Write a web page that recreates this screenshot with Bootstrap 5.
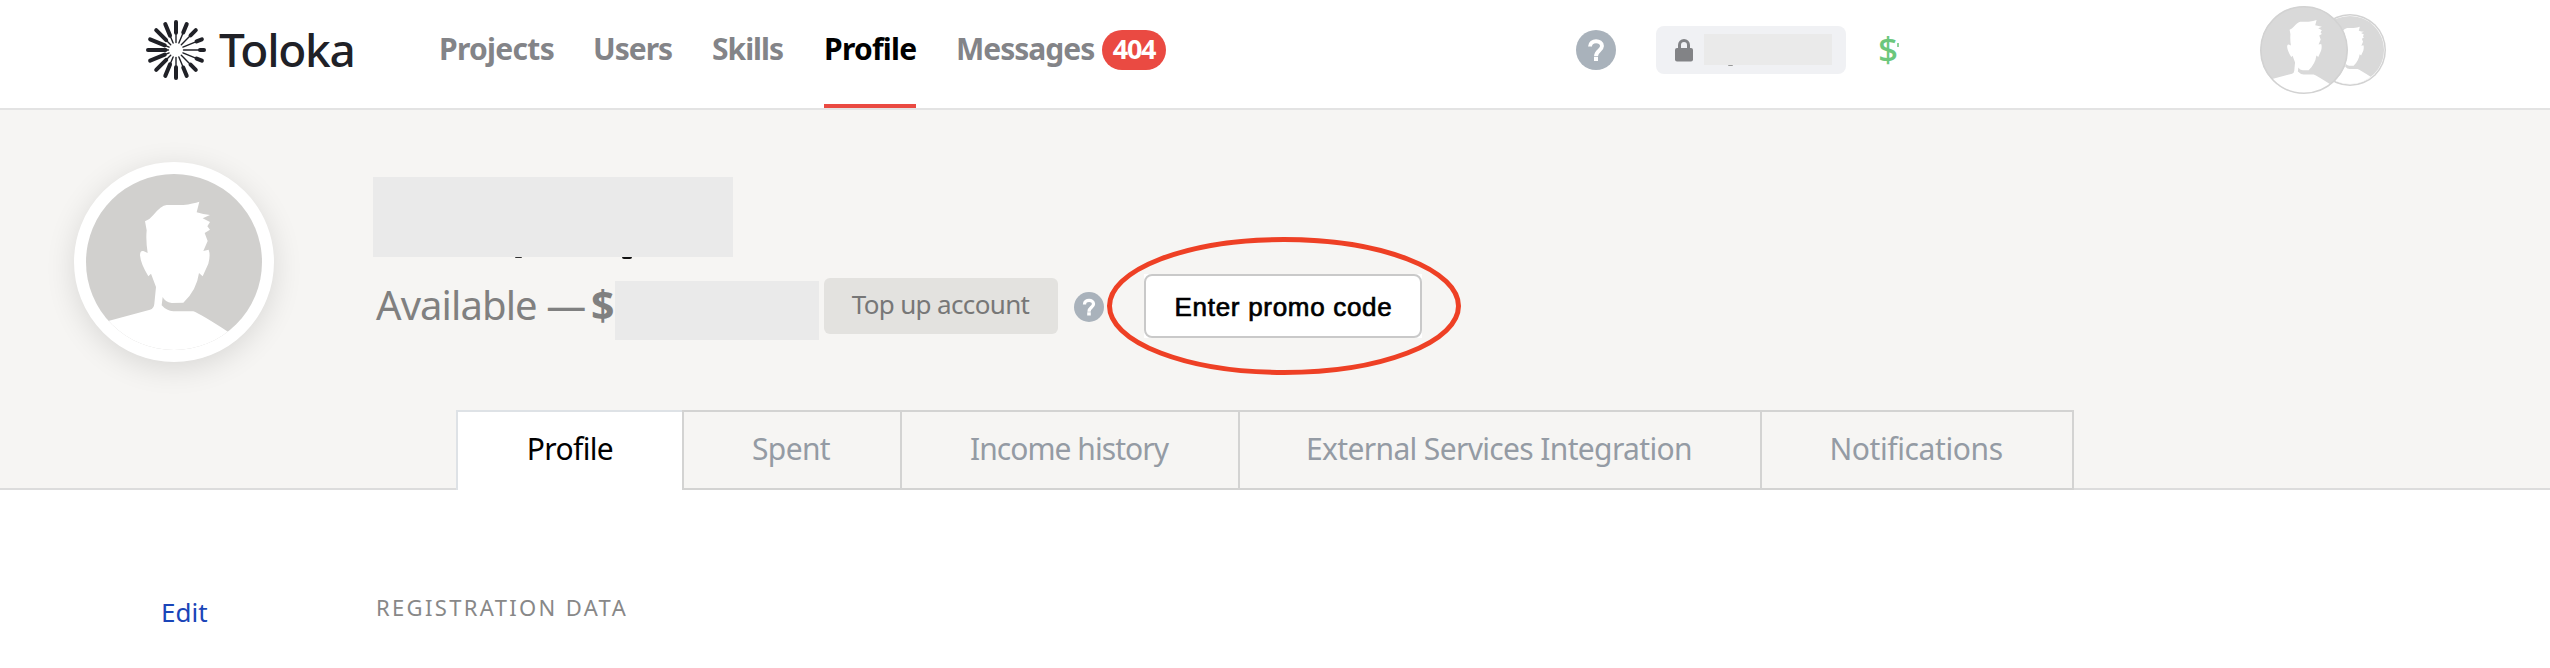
<!DOCTYPE html>
<html lang="en">
<head>
<meta charset="utf-8">
<title>Toloka – Profile</title>
<link rel="stylesheet" href="https://cdn.jsdelivr.net/npm/bootstrap@5.3.0/dist/css/bootstrap.min.css">
<style>
body{font-family:"Noto Sans",sans-serif;background:#fff;color:#000;overflow:hidden}
.site-header{height:110px;padding:0;border-bottom:2px solid #e3e3e3;background:#fff}
.site-header>*{flex:none}
.brand-link{margin-left:146px;width:293px;height:100px;color:#202127}
.brand-name{font-size:46px;font-weight:500;letter-spacing:-1.3px;line-height:60px;margin-left:13px;margin-bottom:3px}
.main-nav{display:grid;grid-template-columns:154px 119px 112px 132px 146px 64px;height:108px;width:727px}
.main-nav .nav-link{font-size:30px;font-weight:700;line-height:98px;padding:0;height:108px;color:#838488;letter-spacing:-1px;white-space:nowrap}
.main-nav .nav-link.active{color:#000;justify-self:start;width:92px;letter-spacing:-.75px;border-bottom:4px solid #ea4a42}
.count-pill{height:40px;margin-top:30px;border-radius:20px;background:#ea4a42;color:#fff;font-size:27px;font-weight:700;letter-spacing:-1.3px;line-height:37px;padding:0}
.help-lg{margin-left:410px}
.secure-box{margin-left:40px;width:190px;height:48px;border-radius:8px;background:#f0f1f4;padding-left:19px}
.veil{background:#eaeaea;position:relative}
.veil-sm{width:128px;height:31px;margin-left:11px;top:-1px}
.speck{position:absolute;top:100%;border-radius:0 0 4px 4px;background:#333}
.amount{margin:-3px 0 0 32px;color:#6cc77c;font-size:35px;font-weight:500;line-height:40px;width:17px;letter-spacing:-1px}
.amount-bit{width:2px;height:4px;background:#8ed39a;margin:-10px 0 0 2px}
.user-pair{margin-left:361px}
.hero{background:#f6f5f3;height:380px;border-bottom:2px solid #dcdcdc}
.hero-top{height:300px;padding-left:74px}
.hero-top>*{flex:none}
.portrait{width:200px;height:200px;margin-top:52px;border:12px solid #fff;background:#fff;box-shadow:0 6px 30px rgba(0,0,0,.12)}
.account{margin-left:99px;padding-top:67px}
.veil-name{width:360px;height:80px}
.balance-row{height:64px;margin-top:17px}
.balance{font-size:40px;line-height:61px;color:#808080;letter-spacing:-.9px;width:242px;padding-left:3px;white-space:nowrap}
.balance b{font-weight:700;font-size:41px;line-height:1;margin-left:-4px}
.veil-sum{width:204px;height:59px;margin-top:7px}
.btn-top{margin:4px 0 0 5px;width:234px;height:56px;border:0;border-radius:6px;background:#e3e2df;color:#777;font-size:26px;line-height:52px;letter-spacing:-.65px;padding:0 1px 4px 0;white-space:nowrap}
.help-sm{margin:18px 0 0 16px}
.promo-wrap{margin-left:40px;position:relative;background:#fff;height:64px}
.btn-promo{width:278px;height:64px;border:2px solid #c9c9c9;border-radius:8px;background:#fff;color:#000;font:400 26px/60px "Liberation Sans",sans-serif;letter-spacing:.7px;-webkit-text-stroke:.7px #000;padding:1px 0 0 1px;white-space:nowrap}
.ring{position:absolute;left:-40px;top:-40px;pointer-events:none}
.profile-tabs{margin-left:456px;width:1618px;height:80px;border:0;display:grid;grid-template-columns:226px 218px 338px 522px 314px}
.profile-tabs .nav-link{height:80px;margin:0;border:2px solid #d3d3d2;border-right-width:0;border-radius:0;padding:0 2px 0 0;text-align:center;font-size:30px;line-height:74px;color:#949ba4;letter-spacing:-.65px;white-space:nowrap;background:#f6f5f3}
.profile-tabs .nav-link.active{background:#fff;color:#000;border-bottom:0;padding-right:0}
.profile-tabs .nav-link:last-child{border-right-width:2px}
.details{padding:100px 0 0 161px}
.edit-link{width:215px;font-size:26px;line-height:44px;color:#1a45b8;text-decoration:none}
.section-label{font-size:22px;line-height:35px;margin:0;font-weight:400;color:#888;letter-spacing:2.35px}
</style>
<script src="https://cdn.jsdelivr.net/npm/bootstrap@5.3.0/dist/js/bootstrap.bundle.min.js"></script>
</head>
<body>
<svg width="0" height="0" class="position-absolute">
  <defs>
    <path id="person" d="M100 562L300 508Q312 504 313 490L318 440L303 400L295 408Q272 370 270 345Q270 330 280 332L293 338Q287 300 290 270L285 243Q300 237 310 224Q333 196 350 194L400 194Q430 190 448 184L440 216Q460 222 480 224L458 234L480 245L472 258L480 268L464 278L473 302L460 332L476 328Q482 345 475 370L458 408L447 398Q440 450 400 487L365 488Q345 485 338 470L335 495Q350 512 370 513L430 513Q450 520 535 575L600 640L100 640Z" fill="#fff"/>
    <clipPath id="disc"><circle cx="372" cy="365" r="264"/></clipPath>
  </defs>
</svg>

<header class="navbar site-header d-flex flex-nowrap align-items-start justify-content-start">
  <a class="brand-link d-flex align-items-center text-decoration-none" href="#">
    <svg id="sun" width="60" height="60" viewBox="-30 -30 60 60" stroke="#202127" stroke-linecap="round"></svg>
    <span class="brand-name">Toloka</span>
  </a>
  <nav class="main-nav">
    <a class="nav-link" href="#" style="letter-spacing:-.7px">Projects</a>
    <a class="nav-link" href="#">Users</a>
    <a class="nav-link" href="#">Skills</a>
    <a class="nav-link active" href="#">Profile</a>
    <a class="nav-link" href="#">Messages</a>
    <span class="badge count-pill">404</span>
  </nav>
  <div class="d-flex align-items-center" style="height:100px">
    <svg class="help-lg" width="40" height="40" viewBox="0 0 40 40"><circle cx="20" cy="20" r="20" fill="#a9b2bb"/><path d="M14 16.5C14 9.5 26 9.5 26 16C26 20.5 20 20.5 20 26.3" fill="none" stroke="#fff" stroke-width="3.9"/><path d="M18 27h4v4h-4z" fill="#fff"/></svg>
    <div class="secure-box d-flex align-items-center">
      <svg width="18" height="24" viewBox="0 0 18 24"><path d="M4.5 12V7a4.5 4.5 0 0 1 9 0v5" fill="none" stroke="#828386" stroke-width="3"/><rect y="10" width="18" height="13.5" rx="2" fill="#828386"/></svg>
      <div class="veil veil-sm"><span class="speck" style="left:24px;width:5px;height:1px;background:#999"></span></div>
    </div>
    <span class="amount">$</span><span class="amount-bit"></span>
    <svg class="user-pair" width="128" height="92" viewBox="0 0 128 92">
      <g transform="translate(90 46)"><circle r="36" fill="#d2d2d2"/><circle r="34.5" fill="#fff"/><g transform="scale(.129) translate(-372 -365)" clip-path="url(#disc)"><rect width="800" height="800" fill="#d9d9d9"/><use href="#person"/></g></g>
      <g transform="translate(44 46)"><g transform="scale(.1655) translate(-372 -365)" clip-path="url(#disc)"><rect width="800" height="800" fill="#d9d9d9"/><use href="#person"/></g><circle r="43.2" fill="none" stroke="#d2d2d2" stroke-width="1.6"/></g>
    </svg>
  </div>
</header>

<section class="hero">
  <div class="hero-top d-flex align-items-start">
    <div class="portrait rounded-circle">
      <svg class="d-block" width="176" height="176" viewBox="108 101 528 528"><g clip-path="url(#disc)"><rect width="800" height="800" fill="#d1d0ce"/><use href="#person"/></g></svg>
    </div>
    <div class="account">
      <div class="veil veil-name"><span class="speck" style="left:142px;width:7px;height:1px"></span><span class="speck" style="left:249px;width:10px;height:2px;background:#111"></span></div>
      <div class="balance-row d-flex align-items-start">
        <div class="balance">Available — <b>$</b></div>
        <div class="veil veil-sum"></div>
        <button class="btn btn-top">Top up account</button>
        <svg class="help-sm" width="30" height="30" viewBox="0 0 40 40"><circle cx="20" cy="20" r="20" fill="#a9b2bb"/><path d="M14 16.5C14 9.5 26 9.5 26 16C26 20.5 20 20.5 20 26.3" fill="none" stroke="#fff" stroke-width="4.4"/><path d="M17.6 27h4.8v4.4h-4.8z" fill="#fff"/></svg>
        <div class="promo-wrap">
          <button class="btn btn-promo">Enter promo code</button>
          <svg class="ring" width="360" height="146" viewBox="1104 234 360 146"><ellipse cx="1284" cy="306" rx="174.5" ry="66.5" fill="none" stroke="#ee4025" stroke-width="5"/></svg>
        </div>
      </div>
    </div>
  </div>
  <nav class="nav nav-tabs profile-tabs">
    <a class="nav-link active" href="#">Profile</a>
    <a class="nav-link" href="#">Spent</a>
    <a class="nav-link" href="#" style="letter-spacing:-.95px">Income history</a>
    <a class="nav-link" href="#">External Services Integration</a>
    <a class="nav-link" href="#" style="letter-spacing:-.4px">Notifications</a>
  </nav>
</section>

<main class="details d-flex align-items-start">
  <a class="edit-link" href="#">Edit</a>
  <h2 class="section-label">REGISTRATION DATA</h2>
</main>

<script>
// Sixteen rays: the thick outer part shortens from the left side to the right
const sun = document.getElementById('sun');
for (let i = 0; i < 16; i++) {
  const a = i * 22.5, turn = Math.min(a, 360 - a);
  const inner = 25 - 13.5 * turn / 180;
  sun.insertAdjacentHTML('beforeend',
    `<g transform="rotate(${-a})"><path d="M7.5 0H26" stroke-width="1.4"/><path d="M${inner - 1} 0H28" stroke-width="4"/></g>`);
}
</script>
</body>
</html>
